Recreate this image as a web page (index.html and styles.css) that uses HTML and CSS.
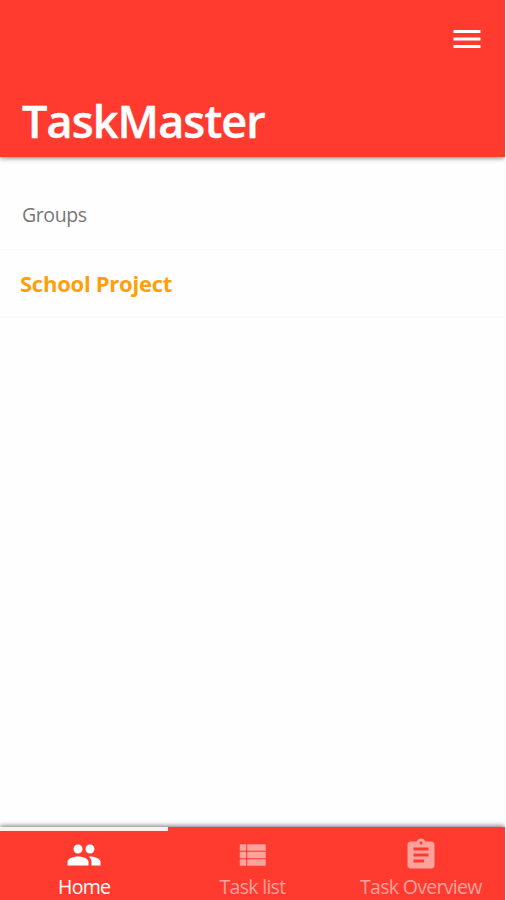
FILE: index.html
```
<!DOCTYPE html>
<html lang="en">

<head>
    <meta charset="utf-8">
    <title>TaskMaster</title>
    <link rel="stylesheet" href="styles.css">
</head>

<body>

<div class="app">
    <header class="appBar">
        <svg class="icon menuIcon" viewBox="0 0 24 24">
            <path d="M3 18h18v-2H3v2zm0-5h18v-2H3v2zm0-7v2h18V6H3z"/>
        </svg>
        <h1 class="appTitle">TaskMaster</h1>
    </header>

    <main class="content">
        <h2 class="listHeader">Groups</h2>
        <ul class="groupList">
            <li class="groupRow"><span class="groupName">School Project</span></li>
        </ul>
    </main>

    <nav class="tabBar">
        <div class="tab active">
            <svg class="icon" viewBox="0 0 24 24">
                <path d="M16 11c1.66 0 2.99-1.34 2.99-3S17.66 5 16 5c-1.66 0-3 1.34-3 3s1.34 3 3 3zm-8 0c1.66 0 2.99-1.34 2.99-3S9.66 5 8 5C6.34 5 5 6.34 5 8s1.34 3 3 3zm0 2c-2.33 0-7 1.17-7 3.5V19h14v-2.5c0-2.33-4.67-3.5-7-3.5zm8 0c-.29 0-.62.02-.97.05 1.16.84 1.97 1.97 1.97 3.45V19h6v-2.5c0-2.33-4.67-3.5-7-3.5z"/>
            </svg>
            <span class="tabLabel">Home</span>
        </div>
        <div class="tab">
            <svg class="icon listIcon" viewBox="0 0 24 24">
                <path d="M4 14h4v-4H4v4zm0 5h4v-4H4v4zM4 9h4V5H4v4zm5 5h12v-4H9v4zm0 5h12v-4H9v4zM9 5v4h12V5H9z"/>
            </svg>
            <span class="tabLabel">Task list</span>
        </div>
        <div class="tab">
            <svg class="icon" viewBox="0 0 24 24">
                <path d="M19 3h-4.18C14.4 1.84 13.3 1 12 1c-1.3 0-2.4.84-2.82 2H5c-1.1 0-2 .9-2 2v14c0 1.1.9 2 2 2h14c1.1 0 2-.9 2-2V5c0-1.1-.9-2-2-2zm-7 0c.55 0 1 .45 1 1s-.45 1-1 1-1-.45-1-1 .45-1 1-1zm2 14H7v-2h7v2zm3-4H7v-2h10v2zm0-4H7V7h10v2z"/>
            </svg>
            <span class="tabLabel">Task Overview</span>
        </div>
    </nav>
</div>

</body>

</html>
```

FILE: styles.css
```
* {
    box-sizing: border-box;
}

body {
    margin: 0;
    background-color: #fafafa;
    font-family: "Open Sans", "Noto Sans", sans-serif;
}

.app {
    display: flex;
    flex-direction: column;
    width: 505px;
    height: 900px;
    overflow: hidden;
    background-color: #fefefe;
}

.icon {
    display: block;
    width: 36px;
    height: 36px;
    fill: currentColor;
}

/* header */

.appBar {
    display: flex;
    flex-direction: column;
    justify-content: space-between;
    height: 157px;
    padding: 21px 20px 9px 22px;
    background-color: #ff3b30;
    color: #fff;
    box-shadow: 0 1px 5px rgba(0, 0, 0, 0.5);
}

.menuIcon {
    align-self: flex-end;
}

.appTitle {
    margin: 0;
    font-size: 45px;
    font-weight: 600;
    line-height: 54px;
    letter-spacing: -0.9px;
    -webkit-text-stroke: 0.4px #fff;
}

/* groups */

.content {
    flex: 1;
    padding-top: 24px;
}

.listHeader {
    height: 70px;
    margin: 0;
    padding-left: 22px;
    border-bottom: 2px solid #fafafa;
    color: #777;
    font-size: 19.5px;
    font-weight: 400;
    line-height: 68px;
    letter-spacing: -0.4px;
}

.groupList {
    margin: 0;
    padding: 0;
    list-style: none;
}

.groupRow {
    height: 67px;
    padding-left: 20px;
    border-bottom: 2px solid #fafafa;
    line-height: 65px;
}

.groupName {
    color: #ff9f0a;
    font-size: 22px;
    font-weight: 700;
    letter-spacing: -0.25px;
}

/* bottom tabs */

.tabBar {
    display: flex;
    height: 73px;
    background-color: #ff3b30;
    box-shadow: 0 -1px 5px rgba(0, 0, 0, 0.55);
}

.tab {
    display: flex;
    flex: 1;
    flex-direction: column;
    align-items: center;
    padding-top: 6px;
    border-top: 4px solid transparent;
    color: #ffa19c;
}

.tab.active {
    border-top-color: #fff0ef;
    color: #fff;
}

.listIcon {
    stroke: currentColor;
    stroke-width: 0.3px;
}

.tabLabel {
    font-size: 19.5px;
    line-height: 27px;
    letter-spacing: -0.7px;
    white-space: nowrap;
}
```
